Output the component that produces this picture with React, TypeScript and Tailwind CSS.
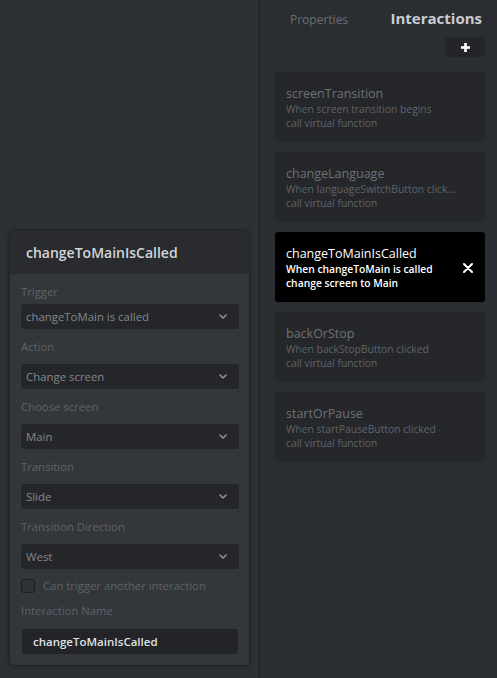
import React from "react";

const font = { fontFamily: '"Open Sans", "Liberation Sans", sans-serif' };

function Chevron() {
  return (
    <svg width="8" height="5" viewBox="0 0 8 5" className="shrink-0">
      <path d="M1 1 L4 4 L7 1" fill="none" stroke="#8a8e92" strokeWidth="1.6" strokeLinecap="round" strokeLinejoin="round" />
    </svg>
  );
}

function Select({ value }: { value: string }) {
  return (
    <div className="h-[25px] rounded-[3px] bg-[#242629] flex items-center justify-between pl-[5px] pr-[12px]">
      <span className="text-[11.4px] text-[#84888c] leading-none">{value}</span>
      <Chevron />
    </div>
  );
}

function Label({ text, className = "" }: { text: string; className?: string }) {
  return <div className={"h-[16px] leading-[16px] text-[11.3px] text-[#5e6367] " + className}>{text}</div>;
}

type Card = { title: string; l1: string; l2: string; active?: boolean };

const cards: Card[] = [
  { title: "screenTransition", l1: "When screen transition begins", l2: "call virtual function" },
  { title: "changeLanguage", l1: "When languageSwitchButton click...", l2: "call virtual function" },
  { title: "changeToMainIsCalled", l1: "When changeToMain is called", l2: "change screen to Main", active: true },
  { title: "backOrStop", l1: "When backStopButton clicked", l2: "call virtual function" },
  { title: "startOrPause", l1: "When startPauseButton clicked", l2: "call virtual function" },
];

export default function App() {
  return (
    <div className="w-[497px] h-[678px] flex bg-[#2d3034] overflow-hidden" style={font}>
      {/* Left area */}
      <div className="w-[258px] shrink-0 flex flex-col pt-[231px] pl-[10px] pr-[9px]">
        <div className="rounded-[4px] shadow-[0_0_4px_rgba(0,0,0,0.55)] overflow-hidden">
          <div className="h-[43px] bg-[#292b2f] flex items-center pl-[16px]">
            <span className="text-[14px] font-semibold text-[#d3d6d9]">changeToMainIsCalled</span>
          </div>
          <div className="bg-[#33363a] pl-[11px] pr-[10px] pt-[10px] pb-[11px] flex flex-col">
            <Label text="Trigger" className="mb-[4px]" />
            <Select value="changeToMain is called" />
            <Label text="Action" className="mt-[10px] mb-[9px]" />
            <Select value="Change screen" />
            <Label text="Choose screen" className="mt-[10px] mb-[9px]" />
            <Select value="Main" />
            <Label text="Transition" className="mt-[10px] mb-[9px]" />
            <Select value="Slide" />
            <Label text="Transition Direction" className="mt-[10px] mb-[9px]" />
            <Select value="West" />
            <div className="mt-[10px] h-[14px] flex items-center gap-[8px]">
              <div className="w-[14px] h-[14px] rounded-[3px] border-[1.5px] border-[#1b1d1f] bg-[#2f3236]" />
              <span className="text-[11.3px] text-[#5e6367]">Can trigger another interaction</span>
            </div>
            <Label text="Interaction Name" className="mt-[10px] mb-[10px]" />
            <div className="mx-[1px] h-[25px] rounded-[3px] bg-[#222427] flex items-center pl-[11px]">
              <span className="text-[11.5px] font-semibold text-[#dfe2e5] leading-none">changeToMainIsCalled</span>
            </div>
          </div>
        </div>
      </div>

      {/* Right panel */}
      <div className="flex-1 bg-[#2a2d31] border-l-[2px] border-[#24272a] flex flex-col pl-[15px] pr-[12px]">
        <div className="pt-[8px] flex items-baseline h-[28px]">
          <span className="ml-[15px] text-[12px] text-[#6a6f74]">Properties</span>
          <span className="ml-auto mr-[3px] text-[15px] font-bold text-[#c9cdd1] leading-[20px]">Interactions</span>
        </div>
        <div className="mt-[9px] flex justify-end">
          <div className="w-[40px] h-[20px] rounded-[3px] bg-[#232528] flex items-center justify-center">
            <svg width="9" height="9" viewBox="0 0 9 9">
              <rect x="3.2" y="0" width="2.6" height="9" fill="#ffffff" />
              <rect x="0" y="3.2" width="9" height="2.6" fill="#ffffff" />
            </svg>
          </div>
        </div>
        <div className="mt-[15px] flex flex-col gap-[10px]">
          {cards.map((c) => (
            <div
              key={c.title}
              className={
                "relative h-[70px] rounded-[3px] pl-[11px] pt-[14px] " +
                (c.active ? "bg-black" : "bg-[#25272b]")
              }
            >
              <div className={"text-[12.5px] leading-[16px] " + (c.active ? "text-white" : "text-[#6d7276]")}>
                {c.title}
              </div>
              <div className={"text-[10.3px] leading-[14px] " + (c.active ? "text-white font-semibold" : "text-[#5f6468]")}>
                {c.l1}
              </div>
              <div className={"text-[10.3px] leading-[14px] " + (c.active ? "text-white font-semibold" : "text-[#5f6468]")}>
                {c.l2}
              </div>
              {c.active && (
                <svg className="absolute right-[12px] top-[31px]" width="10" height="10" viewBox="0 0 10 10">
                  <path d="M1 1 L9 9 M9 1 L1 9" stroke="#ffffff" strokeWidth="2" strokeLinecap="round" />
                </svg>
              )}
            </div>
          ))}
        </div>
      </div>
    </div>
  );
}
